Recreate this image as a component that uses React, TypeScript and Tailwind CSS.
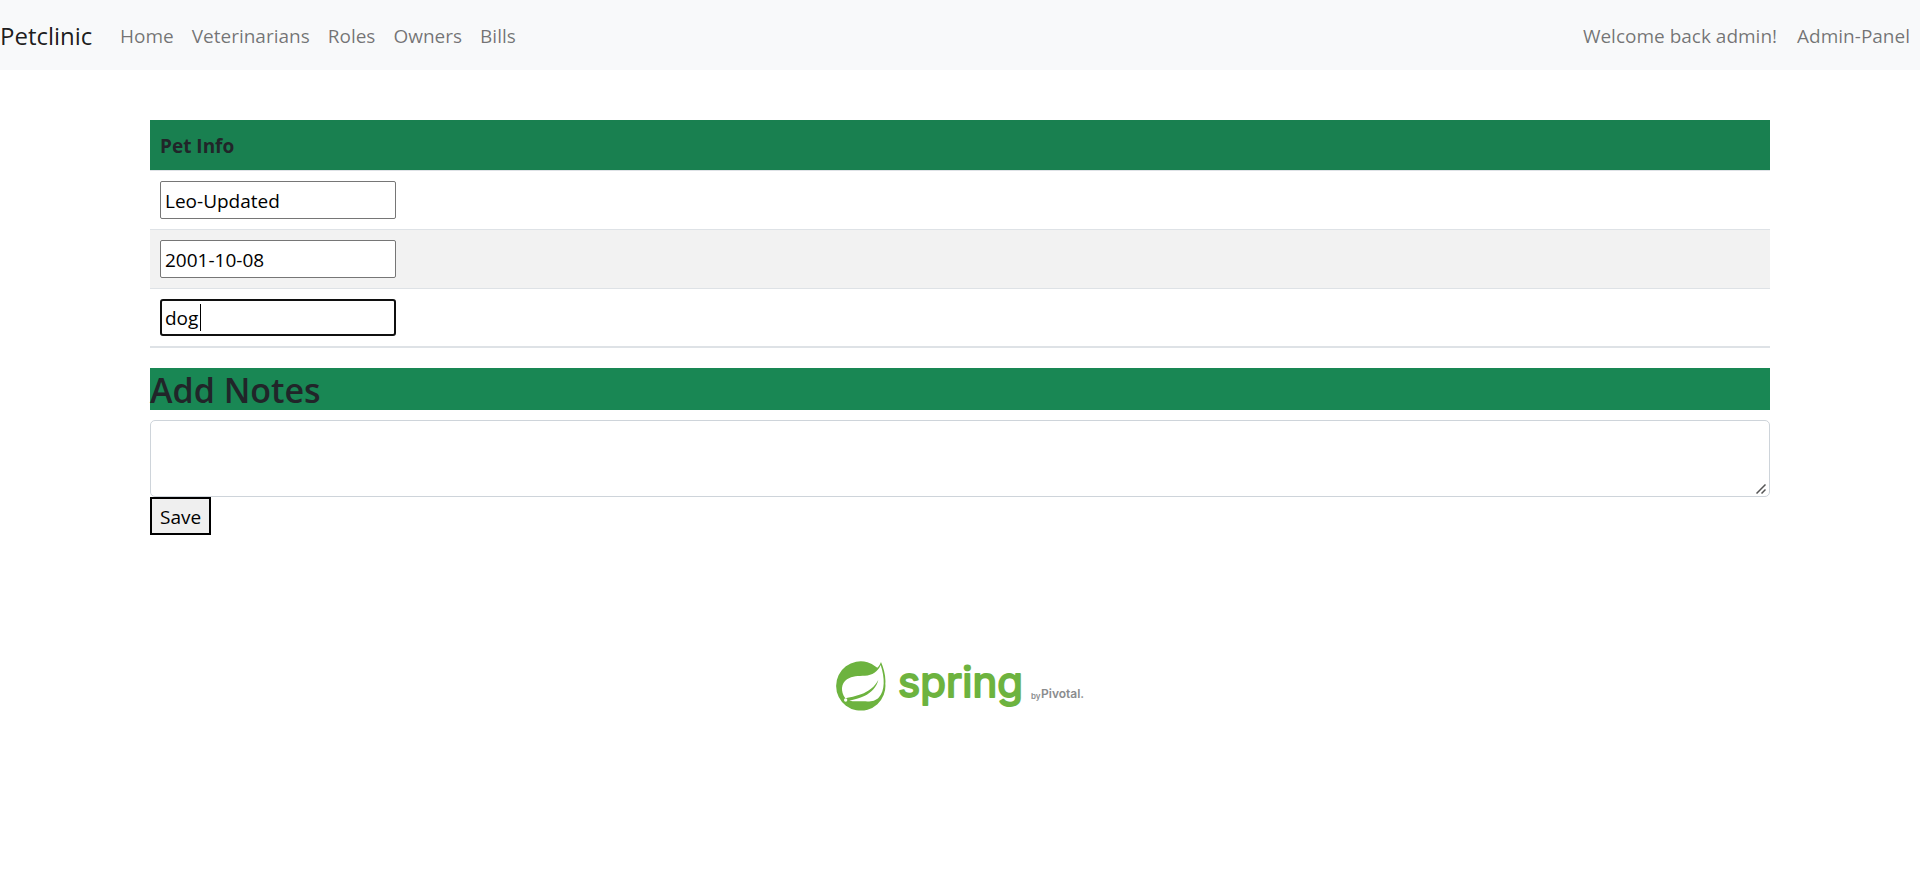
const links = ["Home", "Veterinarians", "Roles", "Owners", "Bills"];

const inputClass =
  "block h-[38px] w-[236px] rounded-[2px] border border-[#767676] bg-white px-1 pt-0.5 text-black outline-none";

function SpringLeaf() {
  return (
    <g transform="translate(-6 -7) scale(0.3333)">
      <path
        fill="#6db33f"
        d="M156 27C153 35 149 41 145 44A74 74 0 1 0 169 92C171 70 164 45 156 27Z"
      />
      <path
        fill="#fff"
        d="M155 36C146 57 130 67 108 68C88 69 70 68 54 79C36 91 34 116 49 136C62 134 80 130 96 124C119 115 138 101 148 80C144 101 127 119 106 129C92 136 76 140 61 143C75 146 88 144 102 145C120 146 138 147 150 133C168 113 168 75 155 36Z"
      />
      <circle cx="50" cy="141" r="5" fill="#fff" />
    </g>
  );
}

export default function App() {
  return (
    <div className="min-h-screen bg-white font-['Open_Sans',sans-serif] text-[19px] leading-[30px] text-[#212529]">
      <nav className="flex h-[70px] items-center bg-[#f8f9fa] pt-0.5">
        <a href="#" className="mr-[21px] w-[90px] text-[24px] text-black/90">
          Petclinic
        </a>
        <ul className="flex text-black/55">
          {links.map((link) => (
            <li key={link}>
              <a href="#" className="block px-[9px]">{link}</a>
            </li>
          ))}
        </ul>
        <ul className="ml-auto flex text-black/55">
          <li>
            <a href="#" className="block px-[10px]">Welcome back admin!</a>
          </li>
          <li>
            <a href="#" className="block px-[10px]">Admin-Panel</a>
          </li>
        </ul>
      </nav>

      <main className="mx-[150px] mt-[50px]">
        <form onSubmit={(event) => event.preventDefault()}>
          <table className="w-full border-collapse text-left">
            <thead>
              <tr className="h-[50px] bg-[#198050]">
                <th className="px-[10px] pt-0.5 pb-0 font-bold">Pet Info</th>
              </tr>
            </thead>
            <tbody>
              <tr className="border-t border-[#dee2e6]">
                <td className="p-[10px]">
                  <input aria-label="Name" defaultValue="Leo-Updated" className={inputClass} />
                </td>
              </tr>
              <tr className="border-y border-[#dee2e6] bg-[#f2f2f2]">
                <td className="p-[10px]">
                  <input aria-label="Birth date" defaultValue="2001-10-08" className={inputClass} />
                </td>
              </tr>
              <tr className="border-b-2 border-[#dee2e6]">
                <td className="p-[10px]">
                  <div className="relative">
                    <input
                      aria-label="Type"
                      autoFocus
                      defaultValue="dog"
                      className="block h-[37px] w-[236px] rounded-[3px] border-2 border-[#101010] bg-white px-[3px] pt-0.5 text-black caret-transparent outline-none"
                    />
                    <span className="absolute top-[5px] left-[40px] h-[27px] w-px bg-black" />
                  </div>
                </td>
              </tr>
            </tbody>
          </table>

          <h2 className="mt-5 mb-[10px] bg-[#198754] pt-0.5 text-[34px] leading-[40px] font-semibold">
            <label htmlFor="notes">Add Notes</label>
          </h2>
          <div className="relative">
            <textarea
              id="notes"
              className="block h-[77px] w-full resize-none rounded-[5px] border border-[#ced4da] px-4 py-2 outline-none"
            />
            <svg
              viewBox="0 0 10 10"
              className="pointer-events-none absolute right-1 bottom-[3px] size-[10px]"
              stroke="#555"
              strokeWidth="1.5"
              aria-hidden="true"
            >
              <path d="M0.5 9.5L9.5 0.5M5.5 9.5L9.5 5.5" />
            </svg>
          </div>
          <button type="submit" className="block h-[38px] border-2 border-black bg-[#efefef] px-2 pt-0.5 text-black">
            Save
          </button>
        </form>
      </main>

      <footer className="mt-[115px] flex justify-center">
        <svg viewBox="0 -10 250 72" className="h-[72px] w-[250px]" role="img" aria-label="Spring by Pivotal">
          <SpringLeaf />
          <text
            x="63"
            y="37"
            fontFamily="Inter, sans-serif"
            fontSize="42"
            fontWeight="400"
            fill="#6db33f"
            stroke="#6db33f"
            strokeWidth="2"
            strokeLinejoin="round"
          >
            spring
          </text>
          <text x="196" y="39" fontFamily="Inter, sans-serif" fontSize="8" fontWeight="600" fill="#8a8c8e">
            by
          </text>
          <text x="206" y="38" fontFamily="Inter, sans-serif" fontSize="12" fontWeight="600" fill="#8a8c8e">
            Pivotal.
          </text>
        </svg>
      </footer>
    </div>
  );
}
